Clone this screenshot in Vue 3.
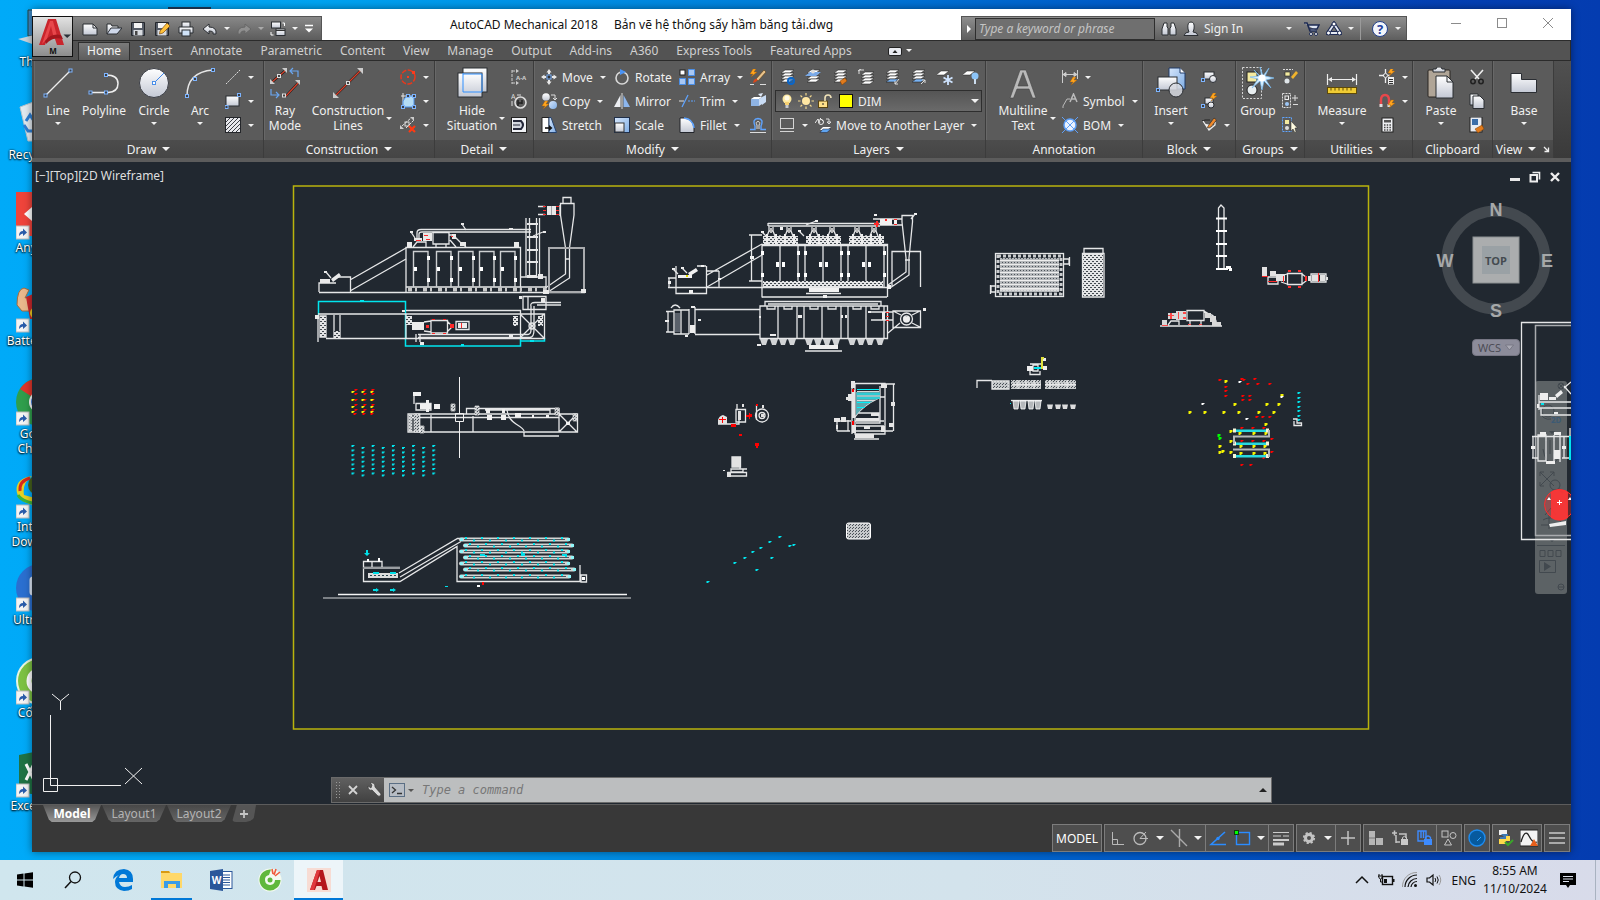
<template>
    <div class="screen">
        <svg class="defs" width="0" height="0" aria-hidden="true">
            <defs>
                <linearGradient id="silver" x1="0" y1="0" x2="0" y2="1">
                    <stop offset="0" stop-color="#ffffff" />
                    <stop offset="1" stop-color="#c3c8d4" />
                </linearGradient>
                <linearGradient id="sky" x1="0" y1="0" x2="1" y2="1">
                    <stop offset="0" stop-color="#d6e6fb" />
                    <stop offset="1" stop-color="#7faee6" />
                </linearGradient>
            </defs>
        </svg>

        <main class="desktop">
            <div class="peek"></div>
            <div class="shortcuts">
                <div v-for="s in shortcuts" :key="s.name" class="shortcut">
                    <Icon :name="s.icon" :size="48" />
                    <span>{{ s.name }}</span>
                </div>
            </div>

            <section class="window">
                <button class="app-button" aria-label="Application menu">
                    <Icon name="logo" :size="40" />
                </button>

                <header class="titlebar">
                    <div class="quick">
                        <template v-for="q in quick" :key="q.icon">
                            <button class="ic" :aria-label="q.icon"><Icon :name="q.icon" /></button>
                            <i v-if="q.caret" class="caret" :class="{ dim: q.dim }"></i>
                        </template>
                        <button class="ic more" aria-label="Customize"><Icon name="customize" :size="10" /></button>
                    </div>
                    <h1 class="title"><span>AutoCAD Mechanical 2018</span><span>Bản vẽ hệ thống sấy hầm băng tải.dwg</span></h1>
                    <div class="infocenter">
                        <button class="play" aria-label="Collapse search"><i class="tri-right"></i></button>
                        <input type="text" class="search" placeholder="Type a keyword or phrase" aria-label="Search help" />
                        <button class="ic" aria-label="Search"><Icon name="binoculars" /></button>
                        <button class="signin"><Icon name="person" /><span>Sign In</span><i class="caret"></i></button>
                        <button class="ic" aria-label="App store"><Icon name="cart" /></button>
                        <button class="ic" aria-label="Stay connected"><Icon name="share" /></button>
                        <i class="caret"></i>
                        <span class="divider"></span>
                        <button class="ic" aria-label="Help"><Icon name="help" :size="18" /></button>
                        <i class="caret"></i>
                    </div>
                    <div class="win-controls">
                        <button aria-label="Minimize"><Icon name="winMin" :size="12" /></button>
                        <button aria-label="Maximize"><Icon name="winMax" :size="12" /></button>
                        <button aria-label="Close"><Icon name="winClose" :size="12" /></button>
                    </div>
                </header>

                <nav class="tabs">
                    <button v-for="t in tabs" :key="t" :class="{ active: t === activeTab }" @click="activeTab = t">{{ t }}</button>
                    <button class="min-ribbon" aria-label="Minimize ribbon"><Icon name="ribbonMin" :size="14" /><i class="caret"></i></button>
                </nav>

                <div class="ribbon">
                    <section class="panel draw">
                        <div class="tools">
                            <button class="big w44"><Icon name="line" :size="32" /><span>Line</span><i class="caret"></i></button>
                            <button class="big w48"><Icon name="polyline" :size="32" /><span>Polyline</span></button>
                            <button class="big w52"><Icon name="circle" :size="32" /><span>Circle</span><i class="caret"></i></button>
                            <button class="big w40"><Icon name="arc" :size="32" /><span>Arc</span><i class="caret"></i></button>
                            <div class="col">
                                <button v-for="i in ['dashLine', 'rect', 'hatch']" :key="i" class="small" :aria-label="i"><Icon :name="i" /><i class="caret"></i></button>
                            </div>
                        </div>
                        <footer>Draw <i class="caret big-caret"></i></footer>
                    </section>

                    <section class="panel construction">
                        <div class="tools">
                            <button class="big w38"><Icon name="ray" :size="32" /><span>Ray<br />Mode</span></button>
                            <button class="big w88"><Icon name="xline" :size="32" /><span class="side">Construction<br />Lines<i class="caret"></i></span></button>
                            <div class="col">
                                <button v-for="i in ['cCircle', 'cRegion', 'cErase']" :key="i" class="small" :aria-label="i"><Icon :name="i" /><i class="caret"></i></button>
                            </div>
                        </div>
                        <footer>Construction <i class="caret big-caret"></i></footer>
                    </section>

                    <section class="panel detail">
                        <div class="tools">
                            <button class="big w70"><Icon name="hide" :size="32" /><span class="side">Hide<br />Situation<i class="caret"></i></span></button>
                            <div class="col">
                                <button v-for="i in ['section', 'detailView', 'breakView']" :key="i" class="small" :aria-label="i"><Icon :name="i" /></button>
                            </div>
                        </div>
                        <footer>Detail <i class="caret big-caret"></i></footer>
                    </section>

                    <section class="panel modify">
                        <div class="tools">
                            <div v-for="(c, n) in modify" :key="n" class="col" :class="'m' + n">
                                <button v-for="b in c" :key="b.icon" class="small" :aria-label="b.icon">
                                    <Icon :name="b.icon" /><span v-if="b.label">{{ b.label }}</span><i v-if="b.caret" class="caret"></i>
                                </button>
                            </div>
                        </div>
                        <footer>Modify <i class="caret big-caret"></i></footer>
                    </section>

                    <section class="panel layers">
                        <div class="tools">
                            <div class="col">
                                <div class="layer-icons">
                                    <button v-for="i in layerIcons" :key="i" class="ic" :aria-label="i"><Icon :name="i" /></button>
                                </div>
                                <div class="combo">
                                    <Icon name="bulb" /><Icon name="sun" /><Icon name="unlock" />
                                    <i class="swatch"></i>
                                    <select aria-label="Layer"><option>DIM</option></select>
                                    <i class="caret big-caret"></i>
                                </div>
                                <div class="layer-move">
                                    <button class="small" aria-label="Layer state"><Icon name="layerBox" /><i class="caret"></i></button>
                                    <button class="small"><Icon name="moveLayer" /><span>Move to Another Layer</span><i class="caret"></i></button>
                                </div>
                            </div>
                        </div>
                        <footer>Layers <i class="caret big-caret"></i></footer>
                    </section>

                    <section class="panel annotation">
                        <div class="tools">
                            <button class="big w70"><Icon name="text" :size="32" /><span class="side">Multiline<br />Text<i class="caret"></i></span></button>
                            <div class="col">
                                <button class="small" aria-label="Dimension"><Icon name="dimension" /><i class="caret"></i></button>
                                <button class="small"><Icon name="symbol" /><span>Symbol</span><i class="caret"></i></button>
                                <button class="small"><Icon name="bom" /><span>BOM</span><i class="caret"></i></button>
                            </div>
                        </div>
                        <footer>Annotation</footer>
                    </section>

                    <section class="panel block">
                        <div class="tools">
                            <button class="big w52"><Icon name="insert" :size="32" /><span>Insert</span><i class="caret"></i></button>
                            <div class="col">
                                <button class="small" aria-label="Create block"><Icon name="blockMake" /></button>
                                <button class="small" aria-label="Edit block"><Icon name="blockFlash" /></button>
                                <button class="small" aria-label="Edit attributes"><Icon name="blockEdit" /><i class="caret"></i></button>
                            </div>
                        </div>
                        <footer>Block <i class="caret big-caret"></i></footer>
                    </section>

                    <section class="panel groups">
                        <div class="tools">
                            <button class="big w40"><Icon name="group" :size="32" /><span>Group</span></button>
                            <div class="col">
                                <button v-for="i in ['groupEdit', 'groupAdd', 'groupPick']" :key="i" class="small" :aria-label="i"><Icon :name="i" /></button>
                            </div>
                        </div>
                        <footer>Groups <i class="caret big-caret"></i></footer>
                    </section>

                    <section class="panel utilities">
                        <div class="tools">
                            <button class="big w70"><Icon name="measure" :size="32" /><span>Measure</span><i class="caret"></i></button>
                            <div class="col">
                                <button class="small" aria-label="Point"><Icon name="point" /><i class="caret"></i></button>
                                <button class="small" aria-label="Snap"><Icon name="magnet" /><i class="caret"></i></button>
                                <button class="small" aria-label="Calculator"><Icon name="calc" /></button>
                            </div>
                        </div>
                        <footer>Utilities <i class="caret big-caret"></i></footer>
                    </section>

                    <section class="panel clipboard">
                        <div class="tools">
                            <button class="big w52"><Icon name="paste" :size="32" /><span>Paste</span><i class="caret"></i></button>
                            <div class="col">
                                <button v-for="i in ['cut', 'copyClip', 'matchClip']" :key="i" class="small" :aria-label="i"><Icon :name="i" /></button>
                            </div>
                        </div>
                        <footer>Clipboard</footer>
                    </section>

                    <section class="panel view">
                        <div class="tools">
                            <button class="big w60"><Icon name="base" :size="32" /><span>Base</span><i class="caret"></i></button>
                        </div>
                        <footer>View <i class="caret big-caret"></i><Icon name="launcher" :size="8" /></footer>
                    </section>
                </div>

                <div class="canvas">
                    <svg class="navbar" viewBox="0 0 32 213" width="32" height="213">
                        <rect width="32" height="213" rx="3" fill="#5c6265" />
                        <g fill="none" stroke="#42494f">
                            <circle cx="26" cy="5" r="3" /><path d="M24 3l4 4M28 3l-4 4" />
                            <circle cx="13" cy="30" r="6" /><path d="M5 31a9 9 0 0 0 11 7" />
                            <path d="M11 73V60M15 73V59M19 73V60M8 68q2 14 10 14q6-2 6-12" />
                            <path d="M5 91L19 105M19 91L5 105M5 95V91H9M15 91H19V95M5 101V105H9" />
                            <circle cx="20" cy="104" r="5" /><path d="M24 108L28 112" stroke-width="2" />
                            <path d="M14 148V134M10 134L16 127L21 134M6 144H18M26 142a10 5 0 0 0-18-3" />
                            <path d="M2 164.500H30" />
                            <path d="M5 169.500H10V175.500H5ZM13 169.500H18V175.500H13ZM21 169.500H26V175.500H21ZM4.500 179.500H20.500V191.500H4.500Z" />
                            <circle cx="26" cy="206" r="3" /><path d="M23 206H29" />
                        </g>
                        <path d="M9 181L16 185.500L9 190ZM14 50H20L17 53ZM14 158H20L17 161Z" fill="#42494f" />
                        <text x="16" y="42" font-size="8" font-weight="700" fill="#3c5a74">2D</text>
                    </svg>

                    <svg class="drawing" viewBox="32 162 1539 642" preserveAspectRatio="xMinYMin meet">
                        <defs>
                            <pattern id="dots" width="3" height="3" patternUnits="userSpaceOnUse">
                                <rect width="3" height="3" fill="#c6c9cb" /><path d="M0 0h1v1H0zM1 2h1v1H1z" fill="#4a5158" />
                            </pattern>
                            <pattern id="mesh" width="4" height="4" patternUnits="userSpaceOnUse">
                                <rect width="4" height="4" fill="#e4e5e6" /><path d="M0 1h2v1H0zM2 3h2v1H2z" fill="#41484f" />
                            </pattern>
                            <pattern id="tubes" width="3" height="4" patternUnits="userSpaceOnUse">
                                <rect width="3" height="4" fill="#b4b7ba" /><path d="M0 0h3v1H0z" fill="#eeeeee" /><path d="M0 2h1v1H0z" fill="#4a5158" />
                            </pattern>
                        </defs>

                        <!-- sheet frame and ground lines -->
                        <rect x="293.500" y="186" width="1075" height="543" fill="none" stroke="#b9b30c" stroke-width="1.500" />
                        <path d="M338 594.500H627" stroke="#f4f4f4" stroke-width="1.500" />
                        <path d="M323 598H631" stroke="#9a9ea2" stroke-width="1.500" />

                        <!-- dryer, front view -->
                        <g class="w">
                            <path d="M319 292V283H336M338 277H350.500V292M350 280L406 248M350 291L406 259" />
                            <path d="M406 292V247.500H520.500V292M520 277H546V292M406 287H546" />
                            <path d="M319 292.500H585" stroke-width="1.500" />
                            <path d="M526 218V277M529.500 218V277M536.500 218V277M539.500 218V277" />
                            <path d="M527 224H538M527 237H538M527 250H538M527 262H538" stroke-width="2" />
                            <path d="M417 238V233Q417 229.500 421 229.500H531M419 238V234Q419 232 422 232H531" />
                            <path d="M433 232.500H449V244H433ZM449 235H453L460 242L466 247M450 240L456 247M413 247L417 242H426V247M436 244V248M446 244V248" />
                            <path d="M563 203V197.500H571V203M560.500 215V203.500H574V215L569.500 248V278L548 292M560.500 215L565.500 248V274L544 289M565 259H570" />
                            <path d="M538 206.500H545M538 214.500H545M551 206V215M560 205V216" />
                        </g>
                        <rect x="549" y="248" width="35" height="44" fill="none" stroke="#a9abae" stroke-width="2" />
                        <path d="M408 289.500H546" stroke="#c8c8c8" stroke-width="4" stroke-dasharray="4 3 2 6" />
                        <g v-for="x in [413, 436, 458, 479, 500]" :key="'d' + x">
                            <path :d="`M${x + 0.5} 287V251.500H${x + 15}V287`" fill="none" stroke="#cdcfd1" stroke-width="1.400" />
                            <path :d="`M${x + 1} 267h3v4h-3zM${x + 14} 256h3v4h-3zM${x + 14} 278h3v4h-3z`" fill="#fff" />
                        </g>
                        <path d="M320 279h10v4h-10zM331 279l8-6 2 3-8 6zM407 242h5v6h-5zM514 242h5v6h-5zM538 274h5v5h-5zM543 290h6v4h-6zM581 289h5v4h-5zM414 238h8v3h-8zM410 231h3v2h-3zM461 223h3v2h-3zM509 228h4v2h-4zM543 231h3v2h-3zM324 271h3v2h-3zM527 275h10v3h-10zM547 206h4v9h-4zM552 206h4v9h-4zM423 233h9v8h-9zM452 234h4v5h-4zM460 242h6v4h-6z" fill="#e9e9e9" />
                        <path d="M462 224L466 230M411 232L415 238M543 232L533 236M326 272L331 278" class="w" />
                        <path d="M543 206h3v1h-3zM543 210h3v1h-3zM543 214h3v1h-3zM556 206h3v1h-3zM556 210h3v1h-3zM556 214h3v1h-3zM416 240h5v1h-5zM424 235h4v1h-4zM426 239h4v1h-4zM451 236h2v1h-2z" fill="#ff2a2a" />

                        <!-- dryer, plan -->
                        <path d="M318.500 315V301.500H405.500V346H520.500V338M520 341H544.500V338" fill="none" stroke="#00e5ee" stroke-width="1.500" />
                        <g class="w">
                            <path d="M318 314H544.500V338.500H326M406 310.500H520.500V338M406 314V338M520 314L544 338M544 314L520 338M318 316V342" />
                            <path d="M320 316H326V337H320ZM334 315V338M340 315V338" />
                            <path d="M431 320.500H447.500V333H431ZM424 322L431 321M424 331L431 332M447 321L451 325V328L447 332M456 321.500H469V329.500H456ZM416 334V342M420 334V342" />
                            <path d="M418 334.500H528Q531 334 531 330V306M418 337.500H530Q534 337 534 330V306M531 306Q530 302.500 535 302.500H561M537 305H561M523 296.500H546V309.500H523ZM528 297V309" />
                            <circle cx="532" cy="326" r="3" />
                        </g>
                        <path d="M320 316h6v21h-6zM334 331h6v7h-6zM406 316h6v9h-6zM513 316h5v10h-5zM538 316h5v10h-5z" fill="url(#mesh)" />
                        <path d="M412 322h12v8h-12zM458 323h9v5h-9zM541 298h4v4h-4zM402 310h3v2h-3zM519 296h3v3h-3zM420 342h4v3h-4zM509 335h4v2h-4zM315 315h4v4h-4z" fill="#ececec" />
                        <path d="M432 319h3v1h-3zM443 319h3v1h-3zM432 333h3v1h-3zM443 333h3v1h-3zM426 325h3v3h-3zM450 324h4v4h-4zM461 323h1v5h-1z" fill="#ff2a2a" />
                        <path d="M360 300h4v2h-4zM461 344h3v2h-3zM530 340h4v2h-4z" fill="#00e5ee" />

                        <!-- dryer with rollers, front view -->
                        <g class="w">
                            <path d="M768 223.500H880M768 226H880M768 223V226" />
                            <path d="M762 244.500H887.500V297M762 244V297.500M762 245.500H887M780 235V281M798 245V281M805 245V281M823 235V281M841 245V281M848 245V281M866 235V281M884 245V288" />
                            <path d="M751.500 235V281M749 235H762M749 281H762M668 287.500H887M762 297H887M806 293.500H841" />
                            <path d="M707 275L762 244M707 287L762 255M676 266V293.500H706.500V266M697 266H706M719 271V287M706 271H719M669 278V288M668 278H676M676 287V278" />
                            <path d="M902 222V215.500H912.500V222L909 258V275L890 288M902 222L906 258V272L888 285M905 260H910M892 287V251.500H920.500V287M873 219H902M880 225H902" />
                        </g>
                        <rect x="763" y="281" width="120" height="6" fill="url(#mesh)" />
                        <g v-for="x in [771, 789, 814, 832, 857, 874]" :key="'h' + x">
                            <path :d="`M${x - 2} 227V231L${x - 4} 236M${x + 2} 227V231L${x + 4} 236M${x - 2} 231H${x + 2}`" class="w" />
                            <path :d="`M${x - 1} 228h2v5h-2z`" fill="#bbb" />
                        </g>
                        <g v-for="x in [763, 806, 849]" :key="'r' + x">
                            <rect :x="x" y="236" width="35" height="8" fill="url(#mesh)" />
                            <path :d="`M${x + 4} 234v10M${x + 13} 234v10M${x + 22} 234v10M${x + 31} 234v10`" stroke="#eee" stroke-width="2" />
                            <path :d="`M${x + 13} 262h3v5h-3zM${x + 19} 262h3v5h-3zM${x - 2} 251h3v4h-3zM${x + 34} 251h3v4h-3zM${x - 2} 273h3v4h-3zM${x + 34} 273h3v4h-3z`" fill="#fff" />
                        </g>
                        <path d="M809 288h30v4h-30zM823 295h4v3h-4zM750 256h4v3h-4zM689 290h4v3h-4zM668 281h3v3h-3zM678 275h14v3h-14zM688 273l8-5 2 3-8 5zM880 219h12v6h-12zM894 219h3v6h-3zM672 268h3v2h-3zM681 267h3v2h-3zM701 265h3v2h-3zM718 278h3v2h-3zM914 213h3v2h-3zM887 285h4v4h-4zM780 227h3v3h-3zM798 230h3v2h-3zM874 214h3v2h-3zM761 231h3v2h-3zM815 220h3v2h-3z" fill="#f2f2f2" />
                        <path d="M816 221L806 225M673 269L678 274M682 268L687 273M915 214L911 219M799 231L804 236M762 232L766 236" class="w" />
                        <path d="M874 223h5v2h-5zM876 221h2v6h-2zM885 219h2v2h-2zM894 219h3v1h-3zM894 224h3v1h-3z" fill="#ff2a2a" />
                        <path d="M686 275h2v2h-2z" fill="#e8e000" />

                        <!-- dryer with rollers, plan -->
                        <g class="w">
                            <path d="M695 309.500H760M695 334.500H760M760 306H887.500V338.500H760ZM765 306V301.500H881V306M768 304H878" />
                            <path d="M778 306V338M797 306V338M804 306V338M822 306V338M841 306V338M848 306V338M866 306V338M884 306V338" />
                            <path d="M674 310V334H681V310ZM689 309V334M695 307V334M681 334H689M681 310H689M668 311V332M666 311.500H674M666 332H674M671 308q4-6 9 0" />
                            <path d="M893 311H920.500V327.500H893ZM893 311L901 315M920 311L912 315M920 327L912 323M888 333L900 323M871 312H893M871 320H893V312" />
                            <circle cx="906.500" cy="319" r="6" /><circle cx="906.500" cy="319" r="3" />
                            <path d="M805 351H842" />
                        </g>
                        <path d="M675 313h5v19h-5z" fill="#59606a" />
                        <g v-for="x in [764, 774, 783, 792, 809, 818, 827, 836, 852, 861, 870, 880]" :key="'t' + x">
                            <path :d="`M${x - 4} 339H${x + 4}L${x + 2} 345H${x - 2}Z`" fill="#d2d4d6" />
                        </g>
                        <g v-for="x in [771, 788, 814, 832, 857, 875]" :key="'b' + x">
                            <path :d="`M${x - 4} 306v3h8v-3`" class="w" />
                        </g>
                        <path d="M809 345h29v4h-29zM690 325h5v8h-5zM665 320h4v2h-4zM691 306h4v2h-4zM698 319h3v2h-3zM685 335h3v2h-3zM770 334h6v2h-6zM759 316h2v2h-2zM798 315h2v3h-2zM800 315h2v3h-2zM841 315h2v3h-2zM845 315h2v3h-2zM757 344h4v2h-4zM868 311h3v2h-3zM923 308h3v3h-3zM904 317h5v5h-5zM882 312h3v8h-3z" fill="#eee" />
                        <path d="M886 312h3v1h-3zM886 316h3v1h-3zM886 320h3v1h-3z" fill="#ff2a2a" />

                        <!-- heat exchanger -->
                        <rect x="995.500" y="253.500" width="68" height="43" class="w" />
                        <rect x="998" y="256" width="63" height="38" fill="none" stroke="#c9cbcd" stroke-width="3" stroke-dasharray="3 2" />
                        <rect x="1000" y="258" width="59" height="34" fill="url(#tubes)" />
                        <path d="M1000 290H1059M1064 259H1069V264H1064M1069.500 257V266M995 286H991V292H995M990.500 285V294" class="w" />
                        <rect x="1083" y="254" width="20" height="42" fill="url(#mesh)" />
                        <path d="M1082.500 253.500H1104V297H1082.500ZM1084 253V248.500H1103V253" class="w" />

                        <!-- chimney, fans and burner -->
                        <path d="M1218.500 269V208L1221 205L1224 208V269" class="w" />
                        <path d="M1216 218.500H1227M1216 231H1227M1216 244H1227M1216 256H1227M1216 269H1228" stroke="#fff" stroke-width="2" />
                        <path d="M1226 266h5v3h-5zM1229 268h3v3h-3z" fill="#fff" />
                        <path d="M1287.500 273.500H1302V284.500H1287.500ZM1281 276L1287 274M1281 282L1287 284M1302 274L1306 277V281L1302 284M1311 274H1326V282H1311ZM1268 277H1278V284H1268Z" class="w" />
                        <path d="M1262 267h5v10h-5zM1270 271h6v5h-6zM1276 274h9v7h-9zM1312 275h6v6h-6zM1320 275h5v6h-5zM1326 277h2v3h-2zM1308 276h3v5h-3z" fill="#e2e2e2" />
                        <path d="M1288 270h3v2h-3zM1298 270h3v2h-3zM1288 286h3v2h-3zM1298 286h3v2h-3zM1262 276h6v1h-6zM1268 281h9v1h-9zM1305 276h2v5h-2zM1283 276h1v6h-1zM1318 273h1v9h-1z" fill="#ff2a2a" />
                        <path d="M1187 310.500H1204V320.500H1187ZM1204 311L1209 314Q1217 316 1216 325M1190 320V326M1201 320V326M1160 326H1222M1168 325L1171 321H1179V325" class="w" />
                        <path d="M1162 320h5v5h-5zM1176 311h10v9h-10zM1205 313h6v5h-6zM1210 316h6v6h-6zM1212 322h9v4h-9zM1168 313h8v6h-8z" fill="#d9d9d9" />
                        <path d="M1168 315h6v1h-6zM1170 313h2v6h-2zM1178 312h1v7h-1zM1183 312h3v2h-3zM1183 317h3v2h-3zM1188 324h3v1h-3zM1199 324h3v1h-3zM1162 325h6v1h-6z" fill="#ff4a4a" />

                        <!-- roof parts -->
                        <path d="M977 388V380.500H992M1030 364H1042V357M1030 371V374.500H1040V371M1033 365H1038V371H1033Z" class="w" />
                        <path d="M992 381h17v8h-17zM1011 380h30v9h-30zM1045 380h31v9h-31z" fill="url(#dots)" />
                        <path d="M1012 384.500H1041M1045 384.500H1076M992 381H1009V389H992ZM1018 380V389M1026 380V389M1034 380V389M1050 380V389M1058 380V389M1067 380V389" class="w" />
                        <path d="M1027 366h6v5h-6zM1042 358h4v3h-4zM1043 366h4v4h-4z" fill="#eee" />
                        <path d="M1041 357h3v2h-3zM1041 359h2v10h-2z" fill="#dfe03a" /><path d="M1034 367h7v2h-7zM1010 403h1v1h-1z" fill="#00e5ee" />
                        <path d="M1011 400.500H1042" class="w" />
                        <path v-for="x in [1016, 1023, 1031, 1038]" :key="'u' + x" :d="`M${x - 3} 401H${x + 3}L${x + 2} 409H${x - 2}Z`" fill="#b5b8bb" stroke="#fff" stroke-width=".8" />
                        <path v-for="x in [1050, 1058, 1065, 1073]" :key="'v' + x" :d="`M${x - 3} 404.500H${x + 3}L${x + 2} 409H${x - 2}Z`" fill="#ddd" />

                        <!-- belt frame, plan -->
                        <g class="w">
                            <path d="M408 414H577.500V432H408ZM412 417.500H559M431 415V432M473 416V432M466.500 414V408.500H559V432M485 410H550V414M559 414L577 432M577 414L559 432M524 432V436H559" />
                            <path d="M507 410Q508 419 516 424T524 431M414 404V394H417M416 403.500H431V410H416Z" />
                        </g>
                        <path d="M409 415H412V431H409ZM414 414h6v18h-6zM420 426h4v7h-4zM475 406h4v9h-4zM555 408h4v7h-4zM573 414h4v7h-4zM451 404h4v7h-4z" fill="url(#dots)" stroke="#fff" stroke-width=".6" />
                        <path d="M413 392h8v4h-8zM420 404h11v5h-11zM426 400h3v12h-3zM434 404h6v5h-6zM487 415h5v5h-5zM501 415h5v5h-5zM502 409h3v4h-3zM486 409h4v4h-4zM515 413h6v4h-6zM532 415h2v3h-2zM546 415h3v3h-3zM566 422h4v3h-4z" fill="#f1f1f1" />

                        <!-- small parts -->
                        <path d="M736 409.500H745.500V422H736ZM718 424H739V420M737 404V409M756.500 420V405M740 467V469M732 457H740.500V467H732ZM731 469H743V472H731ZM728 472.500H746.500V476H728ZM743 469H747" class="w" />
                        <circle cx="762" cy="415.500" r="6.500" class="w" /><circle cx="762" cy="415.500" r="3" class="w" />
                        <path d="M732 457h8v10h-8zM727 472h4v5h-4zM738 411h3v9h-3zM742 404h2v3h-2zM762 405h2v3h-2zM723 470h2v1h-2zM718 424v-4q1-4 5-5l4 2v7zM761 414h3v3h-3z" fill="#e2e2e2" />
                        <path d="M719 419h7v1h-7zM722 417h1v6h-1zM746 415h4v2h-4zM749 413h1v6h-1zM750 414h2v3h-2zM731 424h5v3h-5zM739 434h3v2h-3zM755 443h4v3h-4zM756 446h2v2h-2zM756 404h2v2h-2z" fill="#f00" />

                        <!-- cross section -->
                        <g class="w">
                            <path d="M855 383.500H885V434H855ZM852 384V434M885 431H893M893.500 384V431M885 384H895M880 386V423H856M879 397L885 397M855 421H884M855 426H884M855 431H884M834 421H851M837 431H850M837 420V431M848 420V431M854 439H879" />
                            <path d="M879 398Q862 406 855 417M858 413H879V420" />
                        </g>
                        <path d="M856 392H880V398Q866 403 856 415Z" fill="#5aa9b0" /><path d="M857 389.500H879M857 394H880M857 398H880M857 402.500H870M857 407.500H865" stroke="#00f0f8" /><path d="M857 391.500H879M857 396H880M857 400.500H875" stroke="#d8d8d8" />
                        <path d="M851 381h4v7h-4zM881 384h6v4h-6zM846 397h5v3h-5zM848 394h4v7h-4zM834 418h6v4h-6zM841 417h5v5h-5zM856 418h23v3h-23zM855 434h19v4h-19zM852 425h4v8h-4zM881 426h4v6h-4zM864 426h6v3h-6zM891 402h4v4h-4zM889 423h4v4h-4zM871 413h8v3h-8zM836 425h2v4h-2zM852 390h3v28h-3z" fill="#e6e6e6" />
                        <path d="M852 389h2v3h-2zM852 421h2v4h-2z" fill="#f00" />

                        <!-- belts, section -->
                        <g class="w">
                            <path d="M363.500 567V561.500H382V567M372 561V567M363.500 567V581.500H400L457 546.500V581.500H580V565M399 573L457.500 538.500H463M400 577L461 541.500M363.500 567.500H400M581 575H586.500V582H581Z" />
                        </g>
                        <path d="M363 568H400" stroke="#9a9ea2" stroke-width="2" />
                        <path d="M368 573h30v5h-30z" fill="#dcdcdc" /><path d="M370 575.500H397" stroke="#29424c" stroke-dasharray="2 2" />
                        <g v-for="(b, i) in belts" :key="'belt' + i">
                            <path :d="`M${b[0]} ${b[1]}H${b[2]}`" stroke="#d3d6d4" stroke-width="4" stroke-linecap="round" />
                            <path :d="`M${b[0] + 3} ${b[1]}H${b[2] - 3}`" stroke="#4c565c" stroke-width="1" />
                            <path :d="`M${b[0] + 4} ${b[1] - 1.5}H${b[2] - 2}`" stroke="#00e5ee" stroke-width="2" stroke-dasharray="2 14" />
                            <path :d="`M${b[0] + 12} ${b[1] + 1}H${b[2] - 2}`" stroke="#00e5ee" stroke-width="2" stroke-dasharray="2 14" />
                            <path :d="`M${b[0] - 1} ${b[1] - 1.5}h3v3h-3zM${b[2] - 1} ${b[1] - 1.5}h3v3h-3z`" fill="#8ff7fa" />
                        </g>
                        <path d="M366 550h2v3h2l-3 3-3-3h2zM373 572h6v2h-6zM390 572h6v2h-6zM373 589h3v-1l3 2-3 2v-1h-3zM390 589h3v-1l3 2-3 2v-1h-3zM445 586h3v1h-3zM480 554h5v2h-5zM521 553h4v3h-4zM562 554h5v2h-5z" fill="#00dfe8" />
                        <path d="M477 585h3v2h-3zM582 577h3v3h-3zM367 559h2v3h-2zM378 558h2v4h-2z" fill="#fff" /><path d="M482 582h2v3h-2z" fill="#f00" />

                        <!-- perforated tray -->
                        <rect x="846.500" y="523" width="24" height="16" rx="2" fill="url(#dots)" stroke="#fff" />

                        <!-- flow marks -->
                        <path v-for="(m, i) in marks" :key="'mk' + i" :d="`M${m[0] - 1.5} ${m[1] - 1}h3v${m[3]}h-1v1h-2z`" :fill="m[2]" />
                        <g v-for="y in [430.5, 443.5, 456]" :key="'bar' + y">
                            <rect x="1234" :y="y - 1" width="34" height="2.500" fill="#27d9e0" />
                            <path :d="`M1233 ${y - 2}h3v4h-3zM1266 ${y - 2}h3v4h-3z`" fill="#f6f6d8" />
                        </g>
                        <path d="M1233 436.500H1269V430M1234 437V444M1233 449.500H1269V457" fill="none" stroke="#b4b7ba" stroke-width="2" />
                        <path d="M1293 419H1297V423H1301.500V425.500H1294V421" class="w" />

                        <!-- neighbouring sheet -->
                        <path d="M1575 322.500H1521.500V539.500H1575" class="w" />
                        <path d="M1575 325.500H1535.500V535.500H1575" fill="none" stroke="#a9abae" stroke-width="1.500" />
                        <path d="M1539 402H1575M1539 408H1575M1541 408V415H1575M1564 388L1571 382M1564 386L1571 394M1532 436.500H1571M1533 437V458M1538 435V461H1546V435ZM1554 435V462M1560 435V462M1564 437V458M1562 458H1570M1570 428V460M1539 395V410M1532 458H1538" class="w" />
                        <path d="M1540 393h8v7h-8zM1549 397h7v3h-7zM1555 395l6-5 2 3-6 5zM1540 432h6v4h-6zM1554 432h7v3h-7zM1554 450h6v9h-6zM1546 461h9v3h-9zM1531 446h4v3h-4zM1562 446h4v3h-4zM1537 404h2v4h-2zM1554 412h4v2h-4zM1549 524l17-3v4l-16 2z" fill="#eee" />
                        <path d="M1569 436h3v24h-3zM1541 403h3v2h-3z" fill="#00e5ee" />
                        <circle cx="1559.500" cy="504.500" r="15" fill="#ff2c2c" fill-opacity=".3" stroke="#ff2c2c" />
                        <path d="M1551 492a15 15 0 0 1 17 0v26a15 15 0 0 1-17 0z" fill="#ff3434" fill-opacity=".9" />
                        <path d="M1547 500l2-3 2 3zM1568 500l2-3 2 3zM1559 500h1v5h-1zM1557 502h5v1h-5z" fill="#fff" />

                        <!-- UCS icon and cursor -->
                        <g class="thin">
                            <path d="M43.500 778.500H57.500V791.500H43.500ZM50.500 715V785.500H121M125 768L142 784M142 768L125 784M52 694L60.500 701L69 694M60.500 701V710" />
                            <path d="M459.500 377V413M459.500 422V458M455.500 413.500H463.500V421.500H455.500Z" />
                        </g>
                    </svg>

                    <div class="vp-label">[−][Top][2D Wireframe]</div>
                    <div class="doc-controls">
                        <button aria-label="Minimize drawing"><Icon name="docMin" :size="12" /></button>
                        <button aria-label="Restore drawing"><Icon name="docRestore" :size="12" /></button>
                        <button aria-label="Close drawing"><Icon name="docClose" :size="12" /></button>
                    </div>

                    <svg class="cube" viewBox="0 0 120 124" width="120" height="124">
                        <circle cx="60" cy="60" r="49" fill="none" stroke="#43494f" stroke-width="11" />
                        <rect x="37" y="37" width="46" height="46" fill="#abadae" stroke="#8b8f91" />
                        <rect x="46" y="46" width="28" height="28" fill="#9aa1a5" />
                        <text x="60" y="65" class="cube-top">TOP</text>
                        <text x="60" y="16" class="dir">N</text><text x="60" y="117" class="dir">S</text>
                        <text x="9" y="67" class="dir">W</text><text x="111" y="67" class="dir">E</text>
                    </svg>
                    <button class="wcs">WCS <Icon name="wcsCaret" :size="9" /></button>

                    <div class="command">
                        <div class="grip"></div>
                        <button class="cmd-btn" aria-label="Close command line"><Icon name="cmdClose" :size="12" /></button>
                        <button class="cmd-btn" aria-label="Customize command line"><Icon name="wrench" /></button>
                        <div class="cmd-box">
                            <Icon name="prompt" /><i class="caret dark"></i>
                            <input type="text" placeholder="Type a command" aria-label="Command" />
                            <i class="tri-up"></i>
                        </div>
                    </div>
                </div>

                <div class="bottom">
                    <div class="layouts">
                        <button v-for="l in layouts" :key="l" :class="{ active: l === 'Model' }"><span>{{ l }}</span></button>
                        <button class="plus" aria-label="New layout"><Icon name="plusSmall" :size="10" /></button>
                    </div>
                    <div class="status">
                        <div v-for="(g, n) in status" :key="n" class="group">
                            <div v-for="(cell, k) in g" :key="k" class="cell">
                                <template v-for="(i, j) in cell" :key="j">
                                    <span v-if="i === 'v'" class="drop"><i class="caret status-caret"></i></span>
                                    <button v-else-if="i === 'MODEL'" class="model">MODEL</button>
                                    <button v-else class="st" :aria-label="i"><Icon :name="i" :size="18" /></button>
                                </template>
                            </div>
                        </div>
                    </div>
                </div>
            </section>
        </main>

        <footer class="taskbar">
            <button v-for="t in tasks" :key="t.icon" class="task" :class="t.state" :aria-label="t.icon"><Icon :name="t.icon" :size="24" /></button>
            <div class="tray">
                <Icon name="chevron" :size="18" /><Icon name="battery" :size="18" /><Icon name="wifi" :size="18" /><Icon name="sound" :size="18" />
                <span class="lang">ENG</span>
                <time class="clock">8:55 AM<br />11/10/2024</time>
                <button class="note" aria-label="Notifications"><Icon name="note" :size="18" /></button>
                <span class="show-desktop"></span>
            </div>
        </footer>
    </div>
</template>

<script setup>
import { ref, h } from "vue";

// [viewBox size, markup]
const paper = 'fill="url(#silver)" stroke="#2b2e33"';
const flash = (x, y) => `<path d="M${x + 3} ${y}L${x} ${y + 5}H${x + 3}L${x + 1} ${y + 8}L${x + 7} ${y + 3}H${x + 4}L${x + 6} ${y}Z" fill="#ffa51e" stroke="#a85c00" stroke-width=".4"/>`;
const knob = (x, y) => `<rect x="${x - 1.5}" y="${y - 1.5}" width="3" height="3" fill="#3b3f45" stroke="#7db4ff"/>`;
const stack = (c = "#fff") => `<path d="M6 1H15L11 4H2Z" fill="#fff" stroke="#2a2a2a" stroke-width=".6"/><path d="M6 4H15L11 7H2Z" fill="#fff" stroke="#2a2a2a" stroke-width=".6"/><path d="M6 7H15L11 10H2Z" fill="#fff" stroke="#2a2a2a" stroke-width=".6"/><path d="M6 10H15L11 13H2Z" fill="${c}" stroke="#2a2a2a" stroke-width=".6"/>`;
const arrow = '<rect x="0" y="34" width="13" height="13" fill="#f4f4f4" stroke="#bbb"/><path d="M3 44Q3 39 7 39V36.500L11 40.500L7 44V41.500Q5 41.500 3 44Z" fill="#2a5caa"/>';

const icons = {
    logo: [40, '<path d="M6 28L15 2H23L31 28H24L22 22H14L12 28Z" fill="#c9252c"/><path d="M14 22L18 9L21 22L24 19L20 4H17L9 27Z" fill="#e8474b"/><path d="M12 24Q18 16 28 18L30 22Q20 19 13 27Z" fill="#a3161d"/><path d="M30.500 17.500H38L34.200 21Z" fill="#2b3138"/><text x="20" y="37" font-size="8" font-weight="700" text-anchor="middle" fill="#111">M</text>'],
    new: [16, `<path d="M1 3H11L15 7V14H1Z" ${paper}/><path d="M11 3V7H15" fill="none" stroke="#2b2e33"/>`],
    open: [16, `<path d="M1 13V3H5L6 5H12V7" ${paper}/><path d="M1 13L5 7H16L11 13Z" fill="#cfd8ea" stroke="#2b2e33"/>`],
    save: [16, `<path d="M1.500 1.500H14.500V14.500H1.500Z" fill="#555b66" stroke="#24272c"/><rect x="4" y="2" width="8" height="5" fill="#f4f4f4"/><rect x="3.500" y="9" width="9" height="5.500" fill="#d8dbe0"/><rect x="5" y="10" width="2.500" height="4" fill="#444"/>`],
    saveas: [16, `<path d="M1.500 1.500H14.500V14.500H1.500Z" fill="#555b66" stroke="#24272c"/><rect x="4" y="2" width="8" height="5" fill="#f4f4f4"/><rect x="3.500" y="9" width="9" height="5.500" fill="#d8dbe0"/><path d="M6 10L13 2L16 5L9 12L5.500 13Z" fill="#ffc13b" stroke="#7b4a10" stroke-width=".7"/>`],
    print: [16, `<rect x="4" y="1" width="8" height="6" ${paper}/><path d="M1 6H15V12H1Z" ${paper}/><rect x="4" y="9" width="8" height="6" fill="#cfe2f8" stroke="#2b2e33"/>`],
    undo: [16, `<path d="M1 8L7 3V6Q15 6 14 13H11Q12 10 7 10V13Z" ${paper}/>`],
    redo: [16, '<path d="M15 8L9 3V6Q1 6 2 13H5Q4 10 9 10V13Z" fill="#8f8f8f" stroke="#666"/>'],
    workspace: [16, `<rect x="1.500" y="1" width="9" height="6" ${paper}/><rect x="6" y="8" width="9" height="6.500" ${paper}/><path d="M6 9.500H15" stroke="#333"/><path d="M12.500 2H14.500V5M1 11V14H3.500" fill="none" stroke="#fff"/>`],
    customize: [10, '<path d="M1 1.500H9" stroke="#fff" stroke-width="1.500"/><path d="M1 4.500H9L5 8.500Z" fill="#fff"/>'],
    binoculars: [16, `<path d="M3 2H6V6L7 7V14H1V8Z" ${paper}/><path d="M13 2H10V6L9 7V14H15V8Z" ${paper}/>`],
    person: [16, `<path d="M1 14.500Q2 11 6 11L5 8Q4 1 8 1Q12 1 11 8L10 11Q14 11 15 14.500Z" ${paper}/>`],
    cart: [16, '<path d="M0 2H3L6 10H13M4 4H15L13 8H5" fill="#dfe6f4" stroke="#1d2a52" stroke-width="1.600"/><circle cx="7" cy="13" r="1.500" fill="#fff" stroke="#1d2a52"/><circle cx="12" cy="13" r="1.500" fill="#fff" stroke="#1d2a52"/>'],
    share: [16, '<path d="M8 3L14 12H2Z" fill="none" stroke="#1d2a52" stroke-width="4"/><path d="M8 3L14 12H2Z" fill="none" stroke="#e6ebf5" stroke-width="1.800"/><circle cx="8" cy="3" r="2" fill="#fff" stroke="#1d2a52"/><circle cx="2.500" cy="12" r="2" fill="#fff" stroke="#1d2a52"/><circle cx="13.500" cy="12" r="2" fill="#fff" stroke="#1d2a52"/>'],
    help: [18, '<circle cx="9" cy="9" r="7.500" fill="#f2f5fb" stroke="#23408c"/><text x="9" y="13.500" font-size="13" font-weight="700" text-anchor="middle" fill="#1f3fa0">?</text>'],
    winMin: [12, '<path d="M1 6.500H11" stroke="#8b8b8b"/>'],
    winMax: [12, '<rect x="1.500" y="1.500" width="9" height="9" fill="none" stroke="#8b8b8b"/>'],
    winClose: [12, '<path d="M1 1L11 11M11 1L1 11" stroke="#8b8b8b"/>'],
    ribbonMin: [14, '<rect x=".5" y="3.500" width="13" height="8" rx="1.500" fill="#e8eaf0" stroke="#222"/><path d="M4.500 9L7 6L9.500 9Z" fill="#222"/>'],
    line: [32, '<path d="M4 28L28 4" stroke="#eee" stroke-width="1.300"/>' + knob(3.5, 28.5) + knob(28.500, 3.500)],
    polyline: [32, '<path d="M2 25.500H20Q30 25 30 16.500Q30 8 18 8" fill="none" stroke="#eee" stroke-width="1.500"/>' + knob(2.500, 25.500) + knob(18, 25.500) + knob(18, 8)],
    circle: [32, '<circle cx="16" cy="16" r="14.500" fill="url(#silver)" stroke="#3a3d44"/><path d="M16 16L26 6" stroke="#3d86e8"/><rect x="14.500" y="14.500" width="3" height="3" fill="#fff" stroke="#4a8fe8"/>'],
    arc: [32, '<path d="M3 29Q3 5 29 3" fill="none" stroke="#e6e6e6" stroke-width="1.500"/>' + knob(3, 29) + knob(11, 12) + knob(29, 3)],
    dashLine: [16, '<path d="M1 15L15 1" stroke="#ddd" stroke-dasharray="2 1"/>'],
    rect: [16, `<rect x="1" y="3" width="13" height="10" ${paper}/>` + knob(1.500, 14) + knob(14, 2)],
    hatch: [16, '<rect x=".5" y=".5" width="15" height="15" fill="#e8e8ec" stroke="#24262a"/><path d="M1 5L5 1M1 9L9 1M1 13L13 1M3 15L15 3M7 15L15 7M11 15L15 11" stroke="#3c4046"/>'],
    ray: [32, '<path d="M3 15L17 3M17 29L30 15" stroke="#1d1d1d" stroke-width="2.400"/><path d="M3 15L17 3M17 29L30 15" stroke="#d8402a" stroke-width="1.200"/><path d="M13 1H18V6ZM1 12V17H6ZM26 13H31V18Z" fill="#ccc"/><rect x="8.500" y="7.500" width="3" height="3" fill="#444" stroke="#ddd"/><rect x="13.500" y="27" width="3" height="3" fill="#444" stroke="#ddd"/><path d="M29 10V4H22M24 1L21 4L24 7M2 22V28H9M7 25L10 28L7 31" fill="none" stroke="#6aa6f0" stroke-width="1.200"/>'],
    xline: [32, '<path d="M3 29L29 3" stroke="#1d1d1d" stroke-width="2.400"/><path d="M3 29L29 3" stroke="#d8402a" stroke-width="1.200"/><path d="M25 1H31V7ZM1 25V31H7Z" fill="#ccc"/><rect x="14.500" y="14.500" width="3" height="3" fill="#444" stroke="#ddd"/>'],
    cCircle: [16, '<circle cx="8" cy="8" r="7" fill="none" stroke="#e8381c" stroke-width="1.500" stroke-dasharray="5 1.500"/><path d="M7 7h2v2H7zM12 2h3v3h-3z" fill="#ff3a1c"/>'],
    cRegion: [16, '<path d="M1 3H16M3 0V16" stroke="#e6e6e6"/><path d="M3 14V8Q5 3 9 3H14V14Z" fill="#b4dcf4" stroke="#4a8fe8"/>' + knob(3, 14) + knob(14, 14) + knob(14, 3) + knob(8, 3)],
    cErase: [16, '<path d="M2 9L11 1M6 11L14 3" stroke="#ddd" stroke-dasharray="3 1"/><path d="M0 8V12H4ZM10 0H14V4Z" fill="#ccc"/><rect x="5" y="5" width="4" height="4" fill="none" stroke="#ddd"/><path d="M9 9L15 15M15 9L9 15" stroke="#ff3a12" stroke-width="2.200"/>'],
    hide: [32, '<rect x="7" y="1" width="24" height="24" fill="url(#silver)" stroke="#2b2e33"/><rect x="2" y="6" width="24" height="24" fill="url(#silver)" stroke="#2b2e33"/><path d="M7 6V25H26V7H7" fill="none" stroke="#2f8fff"/>'],
    section: [16, '<path d="M1 1V15M1 2H5M1 14H5" stroke="#ccc" stroke-dasharray="3 1"/><path d="M5 0L8 2L5 4ZM5 12L8 14L5 16Z" fill="#ccc"/><text x="5" y="11" font-size="6" font-weight="700" fill="#ccc">A-A</text>'],
    detailView: [16, '<circle cx="9.500" cy="9.500" r="5.500" fill="none" stroke="#ddd" stroke-width="1.600"/><path d="M7 7V13M11 7V11M7 10H11V7" stroke="#222" fill="none" stroke-width="1.500"/><path d="M1 8V13M6 2H10" stroke="#ddd"/><text x="0" y="6" font-size="7" fill="#ddd">A</text>'],
    breakView: [16, '<rect x=".5" y=".5" width="15" height="15" fill="#f0f2f6" stroke="#222"/><path d="M2 4H10Q14 8 10 12H2" fill="#d3d7e0" stroke="#24283a" stroke-width="2"/><path d="M2 8H9" stroke="#24283a"/>'],
    move: [16, '<path d="M8 0L10.500 3.500H5.500ZM8 16L10.500 12.500H5.500ZM0 8L3.500 5.500V10.500ZM16 8L12.500 5.500V10.500Z" fill="#e8e8e8"/><path d="M8 3V5M8 11V13M3 8H5M11 8H13" stroke="#e8e8e8" stroke-width="2"/><rect x="6" y="6" width="4" height="4" fill="#333" stroke="#7db4ff"/>'],
    copy: [16, '<circle cx="5" cy="4" r="3.800" fill="url(#silver)"/><path d="M10 2H14V6M12 5L14 7L16 5" fill="none" stroke="#ddd"/><circle cx="12" cy="12" r="4" fill="url(#sky)"/>' + flash(1, 8)],
    stretch: [16, '<path d="M1 .5H8V15.500H1Z" fill="#fff" stroke="#222"/><path d="M8 .5H10L15.500 15.500H8Z" fill="url(#sky)" stroke="#25426e"/><path d="M4 11H10" stroke="#111" stroke-width="1.600"/><path d="M8 8L11.500 11L8 14Z" fill="#111"/>'],
    rotate: [16, '<circle cx="8" cy="9" r="6" fill="none" stroke="#d8d8d8" stroke-width="1.600"/><path d="M6 0L12 3L6 6Z" fill="#4a93f5"/>'],
    mirror: [16, '<path d="M6.500 2V14H0Z" fill="#eceef2"/><path d="M9.500 2V14H16Z" fill="#8cb6ee"/><path d="M8 0V16" stroke="#ddd"/>'],
    scale: [16, '<rect x=".5" y=".5" width="15" height="15" fill="url(#sky)" stroke="#21304a"/><rect x="1" y="6" width="9" height="9" fill="url(#silver)" stroke="#333"/>'],
    array: [16, '<rect x="1" y="1" width="5" height="5" fill="#fff" stroke="#222"/><path d="M9.500 .5H15.500V6.500H9.500ZM.5 9.500H6.500V15.500H.5ZM9.500 9.500H15.500V15.500H9.500Z" fill="#a9c8f4" stroke="#4a8fe8"/>'],
    trim: [16, '<path d="M0 8H5" stroke="#ddd"/><path d="M3 14L9 2" stroke="#5fa4ff" stroke-width="1.300"/><path d="M9 8H16" stroke="#5fa4ff" stroke-dasharray="2 1"/>'],
    fillet: [16, '<path d="M1 15.500V1H5Q14 2 15 11V15.500Z" fill="url(#silver)" stroke="#22252b"/><path d="M5 1Q14 2 15 11" fill="none" stroke="#5fa4ff" stroke-width="1.500"/>'],
    eraser: [16, flash(0, 0) + '<path d="M6 10L14 1L16 3L8 12Z" fill="#e9c28a" stroke="#5a3c14" stroke-width=".6"/><path d="M3 14Q4 9 7 10Q9 12 3 14Z" fill="#d8481c"/><path d="M0 15.500H4M10 15.500H16" stroke="#ddd"/>'],
    explode: [16, '<path d="M1 6L4 4H12L9 6Z" fill="#fff"/><path d="M1 6H9V13H1Z" fill="#8fb4e4"/><path d="M9 6L12 4V11L9 13ZM12 4L16 2V9L12 12Z" fill="#c9dcf5"/><path d="M8 1L13 0L11 4Z" fill="#dfe9f8"/>'],
    offset: [16, '<path d="M0 12.500H5V9Q2 2 8 1.500Q14 2 11 9V12.500H16" fill="none" stroke="#5fa4ff" stroke-width="1.400"/><path d="M0 15.500H16M7 12V8Q5 5 8 4.500Q11 5 9 8V12" fill="none" stroke="#ddd"/>'],
    lyProps: [16, stack() + '<circle cx="12" cy="12" r="3" fill="none" stroke="#0b66c8" stroke-width="2"/><path d="M12 8V16M8 12H16" stroke="#0b66c8"/>'],
    lyIso: [16, stack() + '<path d="M5 3H16L11 7H0Z" fill="#79a9e8"/><circle cx="8" cy="2.500" r="2" fill="#ddd"/>'],
    lyMatch: [16, stack() + '<path d="M8 12L13 9L15 12L10 16Z" fill="#e07a1c" stroke="#7a3c00" stroke-width=".5"/>'],
    lyPrev: [16, '<g transform="translate(1 2)">' + stack() + '</g><path d="M1 5V1H6M3 0L0 2" fill="none" stroke="#ddd"/>'],
    lyDown: [16, stack("#79b4f5") + '<path d="M15 10L11 15M11 12V15H14" fill="none" stroke="#ddd"/>'],
    lyUp: [16, stack("#79b4f5") + '<path d="M11 15L15 11M12 11H15V14" fill="none" stroke="#ddd"/>'],
    lyFreeze: [16, '<path d="M4 2H12L7 6H-1Z" fill="#fff" stroke="#222" stroke-width=".5"/><path d="M11 6V16M6.500 8.500L15.500 13.500M15.500 8.500L6.500 13.500" stroke="#cfe4ff" stroke-width="1.800"/>'],
    lyOff: [16, '<path d="M4 2H12L7 6H-1Z" fill="#fff" stroke="#222" stroke-width=".5"/><circle cx="12" cy="7" r="3.500" fill="#8cc4f8"/><path d="M11 10H13V15H11Z" fill="#cde"/>'],
    bulb: [16, '<circle cx="8" cy="6" r="4.500" fill="#ffe9a0"/><circle cx="8" cy="5" r="2.500" fill="#fffbe6"/><path d="M6 9H10V12H6Z" fill="#f5cf70"/><path d="M6.500 12H9.500V15H6.500Z" fill="#c6c9ce"/>'],
    sun: [16, '<circle cx="8" cy="8" r="4" fill="#ffe7a3"/><path d="M8 0V2.500M8 13.500V16M0 8H2.500M13.500 8H16M2.500 2.500L4.200 4.200M13.500 2.500L11.800 4.200M2.500 13.500L4.200 11.800M13.500 13.500L11.800 11.800" stroke="#f4d98e" stroke-width="1.200"/>'],
    unlock: [16, '<rect x="1.500" y="8" width="9" height="6.500" fill="#ffe08a" stroke="#5a4410"/><path d="M8 8V5Q8 2 11 2Q14 2 14 5" fill="none" stroke="#f0e2b8" stroke-width="1.600"/><path d="M6 10V12" stroke="#222"/>'],
    layerBox: [16, '<rect x="1.500" y="1.500" width="13" height="10" fill="none" stroke="#d4d4d4"/><path d="M1 14.500H15" stroke="#d4d4d4"/>'],
    moveLayer: [16, '<path d="M0 6L3 2L5 6M5 1L8 4" stroke="#eee" fill="none"/><circle cx="6" cy="5" r="2.500" fill="none" stroke="#eee"/><path d="M11 2H14V5M12 5H16L14 7Z" fill="none" stroke="#ddd"/><path d="M8 10H16L12 13H5Z" fill="#fff"/><path d="M8 12H16L12 15.500H5Z" fill="#5fa4f0" stroke="#223" stroke-width=".5"/>'],
    text: [32, '<path d="M3 31L13 3H19L29 31H25.500L22 22H10L6.500 31ZM11 19H21L16 5.500Z" fill="#b9b9b9" stroke="#444" stroke-width=".6"/>'],
    dimension: [16, '<path d="M.5 1V14M15.500 1V10M1 5.500H15M1 5.500L4 3.500V7.500ZM15 5.500L12 3.500V7.500Z" stroke="#ccc" fill="#ccc"/>' + flash(8, 8)],
    symbol: [16, '<path d="M1 15V13L5 6H8" fill="none" stroke="#bbb"/><path d="M8 9L11.500 1L15 9M9.500 6H13.500" fill="none" stroke="#bbb" stroke-width="1.500"/>'],
    bom: [16, '<circle cx="8" cy="8" r="6" fill="#eaf2ff" stroke="#5f9ff5" stroke-width="1.500"/><path d="M0 0L16 16M16 0L0 16" stroke="#5f9ff5"/>'],
    insert: [32, `<path d="M14 1H25L30 6V22H14Z" fill="url(#sky)" stroke="#203a66"/><path d="M25 1V6H30" fill="#fff" stroke="#203a66"/><rect x="3" y="10" width="19" height="13" ${paper}/><circle cx="21" cy="23" r="7" fill="#d8dbe2" fill-opacity=".85" stroke="#2b2e33"/>` + knob(3, 23)],
    blockMake: [16, `<rect x="3" y="3" width="10" height="7" ${paper}/><circle cx="12" cy="10" r="3.500" ${paper}/>` + knob(2, 11)],
    blockFlash: [16, `<rect x="4" y="5" width="8" height="6" ${paper}/><circle cx="10" cy="12" r="3" ${paper}/>` + knob(2, 13) + flash(9, 0)],
    blockEdit: [16, '<path d="M1 4L4 3H9" fill="none" stroke="#222"/><path d="M2 4L8 13L14 8V5" fill="none" stroke="#eee" stroke-width="1.300"/><path d="M4 7L8 12L12 8Z" fill="#fff"/><path d="M7 9L13 1L15.500 3L10 10L6.500 11Z" fill="#f08a2c" stroke="#222" stroke-width=".6"/>'],
    group: [32, '<path d="M.5 .5H19.500V31.500H.5Z" fill="none" stroke="#d5d5d5" stroke-dasharray="2 1.500"/><rect x="5" y="5" width="10" height="10" fill="#f3eaa0" stroke="#222"/><circle cx="10" cy="23" r="5" fill="#e8eef0" stroke="#222"/><path d="M20 11L18 0L21 9L27 1L23 9L32 11L24 13L29 21L22 14L20 23L18 14L10 21L16 12L8 10L17 9L12 3Z" fill="#d6eeff" stroke="#74b7ee" stroke-width=".7"/><circle cx="20" cy="11" r="3.500" fill="#fff"/>'],
    groupEdit: [16, '<path d="M1 .5H11" stroke="#ddd" stroke-dasharray="2 1"/><rect x="3" y="3" width="5" height="4" fill="#f3eaa0" stroke="#222" stroke-width=".6"/><circle cx="5" cy="12" r="2.500" fill="#e0e6ea"/><path d="M9 8L14 2L16 4L11 10Z" fill="#f0b32c"/>'],
    groupAdd: [16, '<path d="M.5 .5H8.500V14.500H.5Z" fill="none" stroke="#ddd" stroke-dasharray="2 1"/><rect x="3" y="3" width="3.500" height="3.500" fill="none" stroke="#eee"/><circle cx="5" cy="11" r="2" fill="#9cc6f5"/><path d="M10 5H16M13 2V8M11 11.500H16" stroke="#ddd"/>'],
    groupPick: [16, '<path d="M.5 .5H9.500V14.500H.5Z" fill="none" stroke="#5fa4ff" stroke-dasharray="2 1"/><rect x="3" y="3" width="4" height="4" fill="#f3eaa0"/><circle cx="5" cy="11" r="2" fill="#ddd"/><path d="M9 4V14L11 12L13 16L14 15L13 11H15.500Z" fill="#fffbe0" stroke="#222" stroke-width=".5"/>'],
    measure: [32, '<path d="M1.500 7V18M30.500 7V18M3 12.500H29" stroke="#eee" stroke-width="1.200"/><path d="M2 12.500L6 10V15ZM30 12.500L26 10V15Z" fill="#eee"/><rect x="1.500" y="20.500" width="29" height="6" fill="#f0cc34" stroke="#5e4a08"/><path d="M5 21V23.500M9 21V23.500M13 21V23.500M17 21V23.500M21 21V23.500M25 21V23.500" stroke="#5e4a08"/>'],
    point: [16, '<path d="M0 6.500H5M9 6.500H11M6.500 0V4M6.500 9V14" stroke="#eee" stroke-width="1.300"/><circle cx="6.500" cy="6.500" r="2" fill="none" stroke="#eee"/><rect x="9" y="8" width="6" height="7.500" fill="#eee"/><path d="M10 10.500H14M10 12.500H14M10 14.500H14" stroke="#333"/>' + flash(9, -1)],
    magnet: [16, '<path d="M2 13V7Q2 2 6 2Q10 2 10 7V13" fill="none" stroke="#e8474b" stroke-width="2.400"/><path d="M.5 11H3.500V14H.5ZM8.500 11H11.500V14H8.500Z" fill="#ddd"/>' + flash(9, 7)],
    calc: [16, '<rect x="3" y="1" width="11" height="14" fill="#f0f1f4" stroke="#222"/><rect x="5" y="3" width="7" height="2.500" fill="#555"/><path d="M5 8H12M5 10.500H12M5 13H12" stroke="#444" stroke-width="1.400" stroke-dasharray="1.500 1.200"/>'],
    paste: [32, `<rect x="3" y="3" width="22" height="27" rx="1" fill="#b0a597" stroke="#2b2723"/><path d="M8 5V2H11L12 0H16L17 2H20V5Z" ${paper}/><path d="M11 9H22L28 15V31H11Z" ${paper}/><path d="M22 9V15H28" fill="none" stroke="#2b2e33"/>`],
    cut: [16, '<path d="M2 1L10 10M14 1L6 10" stroke="#eee" stroke-width="1.600"/><circle cx="4" cy="12.500" r="2.200" fill="none" stroke="#222" stroke-width="1.600"/><circle cx="12" cy="12.500" r="2.200" fill="none" stroke="#222" stroke-width="1.600"/>'],
    copyClip: [16, `<path d="M1 1H9V12H1Z" ${paper}/><path d="M4 3H11L15 7V15.500H4Z" ${paper}/>`],
    matchClip: [16, '<rect x="1" y="0" width="12" height="15" fill="#e9ecf2" stroke="#222"/><rect x="3" y="2" width="6" height="6" fill="#3c6ea8"/><path d="M6 12L13 8L15 12L9 16Z" fill="#e07a1c" stroke="#7a3c00" stroke-width=".5"/>'],
    base: [32, `<path d="M3 6.500H13.500V12.500H28.500V25.500H3Z" ${paper}/>`],
    launcher: [8, '<path d="M2 2L6 6M6.500 2.500V6.500H2.500" fill="none" stroke="#eee" stroke-width="1.300"/>'],
    docMin: [12, '<rect x="1" y="7" width="10" height="3" fill="#e8e8e8"/>'],
    docRestore: [12, '<path d="M3.500 1.500H10.500V8.500" fill="none" stroke="#eee" stroke-width="1.600"/><rect x="1.500" y="4" width="6.500" height="6.500" fill="none" stroke="#eee" stroke-width="2"/>'],
    docClose: [12, '<path d="M2 2L10 10M10 2L2 10" stroke="#eee" stroke-width="2.400"/>'],
    wcsCaret: [9, '<path d="M.5 2H8.500L4.500 7Z" fill="#a9a9b4" stroke="#72727e" stroke-width=".8"/>'],
    cmdClose: [12, '<path d="M2 2L10 10M10 2L2 10" stroke="#d4d4d4" stroke-width="1.800"/>'],
    wrench: [16, '<path d="M2 4L5 6L6 3L4 1Q9 0 9 5L15 12Q15 15 12 14L6 8Q2 9 2 4Z" fill="#d8d8d8" stroke="#333" stroke-width=".6"/>'],
    prompt: [16, '<rect x=".5" y="1.500" width="15" height="13" fill="#b6bcc4" stroke="#5a6e84"/><path d="M3 5L6.500 8L3 11M8 11.500H13" fill="none" stroke="#333" stroke-width="1.300"/>'],
    plusSmall: [10, '<path d="M5 1V9M1 5H9" stroke="#c4c4c4" stroke-width="1.800"/>'],
    ortho: [18, '<path d="M4.500 3V15.500H16M5 10.500H9.500V15" fill="none" stroke="#b9b9b9"/>'],
    polar: [18, '<circle cx="8" cy="9.500" r="6" fill="none" stroke="#bbb" stroke-width="1.300"/><path d="M8 9.500H16M8 9.500L14 3" stroke="#bbb"/>'],
    iso: [18, '<path d="M1 1L17 17M9.500 0V18" stroke="#aaa" stroke-width="1.400"/>'],
    track: [18, '<path d="M16 3L2 15.500H17" fill="none" stroke="#2b8cff" stroke-width="1.600"/><circle cx="9" cy="9.500" r="1.700" fill="#2b8cff"/>'],
    osnap: [18, '<rect x="3.500" y="3.500" width="13" height="12" fill="none" stroke="#2b8cff" stroke-width="1.400"/><rect x="1" y="1" width="5" height="5" fill="#0d3d0d"/><rect x="2" y="2" width="3" height="3" fill="#0f0"/>'],
    lweight: [18, '<path d="M1 3.500H17M1 7H9M11 7H17" stroke="#ccc"/><path d="M1 11H17" stroke="#ccc" stroke-width="2"/><path d="M1 15H12" stroke="#ccc" stroke-width="3"/>'],
    gear: [18, '<circle cx="9" cy="9" r="3.500" fill="none" stroke="#c4c4c4" stroke-width="3"/><circle cx="9" cy="9" r="5.200" fill="none" stroke="#c4c4c4" stroke-width="1.800" stroke-dasharray="2.200 1.880"/>'],
    plus: [18, '<path d="M9 2V16M2 9H16" stroke="#c4c4c4" stroke-width="1.500"/>'],
    quick1: [18, '<path d="M2 2H8V16H2ZM9 9H16V16H9Z" fill="#b6b6b6"/><path d="M2 9H8" stroke="#777"/>'],
    quick2: [18, '<path d="M1 4H6M3.500 1.500V6.500M5 6V14M5 13H9M8 5H15V9" stroke="#c4c4c4" fill="none" stroke-width="1.500"/><rect x="10" y="10" width="7" height="6" fill="#c9c9c9"/><path d="M11.500 10V8.500Q13.500 6 15.500 8.500V10" fill="none" stroke="#c9c9c9"/>'],
    quick3: [18, '<path d="M3 2H11V12H3ZM6 2V9M8.500 2V9" fill="none" stroke="#3d8bff" stroke-width="1.400"/><rect x="9" y="10" width="8" height="6" fill="#3d8bff"/><path d="M10.500 10V8.500Q13 5.500 15.500 8.500V10" fill="none" stroke="#3d8bff" stroke-width="1.300"/>'],
    shapes: [18, '<rect x="2" y="2" width="6" height="6" fill="none" stroke="#c4c4c4"/><circle cx="13" cy="6.500" r="3" fill="none" stroke="#c4c4c4"/><path d="M4.500 16L8 10L11.500 16Z" fill="none" stroke="#c4c4c4"/>'],
    hw: [18, '<circle cx="9" cy="9" r="8" fill="#075a9e" stroke="#1d8cf0" stroke-width="1.400"/><path d="M9 12L13 8" stroke="#2fa4ff"/>'],
    python: [18, '<path d="M3 1H11V6H3Z" fill="#f0f0f0"/><path d="M5 5H12V11H4V8H8" fill="#3d79b4"/><path d="M3 10H10V15H3ZM10 7H14V12H10Z" fill="#ffd94a"/><path d="M9 13L12 16L17 11" fill="none" stroke="#3aa52a" stroke-width="2"/>'],
    graph: [18, '<rect x="0" y="1" width="18" height="16" fill="#f4f4f4" stroke="#222"/><path d="M1 13Q5 -1 9 7T17 13" fill="none" stroke="#222" stroke-width="1.300"/><path d="M14 10L18 17H10Z" fill="#e8601c"/>'],
    menu: [18, '<path d="M1 4H17M1 9H17M1 14H17" stroke="#c9c9c9" stroke-width="1.600"/>'],
    windows: [24, '<path d="M4 6.500L10.500 5.600V11.500H4ZM11.500 5.400L20 4.200V11.500H11.500ZM4 12.500H10.500V18.400L4 17.500ZM11.500 12.500H20V19.800L11.500 18.600Z" fill="#000"/>'],
    search: [24, '<circle cx="13" cy="9.500" r="5.500" fill="none" stroke="#111" stroke-width="1.300"/><path d="M9 13.500L3 20" stroke="#111" stroke-width="1.500"/>'],
    edge: [24, '<path d="M2 11Q3 1 13 1Q22 2 22 11V14H8Q9 19 14 19Q18 19 21 17V21Q18 23 13 23Q4 22 4 14Q4 10 8 7Q5 8 2 11ZM8 10H16Q16 6 12 6Q9 6 8 10Z" fill="#0078d7"/>'],
    explorer: [24, '<path d="M1 3H9L11 5H22V20H1Z" fill="#ffd869"/><path d="M1 3H9L10 5H1Z" fill="#d99a12"/><path d="M4 20V13H20V20H16V16H8V20Z" fill="#3a9ce8"/>'],
    word: [24, '<rect x="12" y="3.500" width="11" height="17" fill="#fff" stroke="#2b579a"/><path d="M14 7H21M14 9.500H21M14 12H21M14 14.500H21M14 17H21" stroke="#2b579a"/><path d="M1 3L14 1V23L1 21Z" fill="#2b579a"/><text x="7.500" y="16" font-size="10" font-weight="700" text-anchor="middle" fill="#fff">W</text>'],
    coccoc: [24, '<circle cx="12" cy="12" r="11.500" fill="#f3faf0"/><path d="M13 1.500A10.500 10.500 0 1 0 22.500 12H17A5 5 0 1 1 11 7Z" fill="#5fb83c"/><circle cx="12" cy="12" r="2.500" fill="#5fb83c"/><path d="M14 1L15 6M18 1L16 7M22 4L17 8" stroke="#f05a3c" stroke-width="1.600"/>'],
    acad: [24, '<rect width="24" height="24" fill="#f7dcd4"/><path d="M3 22L10 2H16L21 22H15.500L14.500 18H9.500L8 22ZM10.500 14H14L12.500 8Z" fill="#b5161c"/><path d="M3 22L10 2H13L7 22Z" fill="#e0393c"/>'],
    chevron: [18, '<path d="M3 12L9 6L15 12" fill="none" stroke="#111" stroke-width="1.500"/>'],
    battery: [18, '<rect x="5.500" y="5.500" width="10" height="8" fill="none" stroke="#111" stroke-width="1.400"/><path d="M16 8H17.500V11H16ZM7 8H10V12H7Z" fill="#111"/><path d="M1 5H6M2 3V5M5 3V5M1.500 5Q2 8 3.500 8T5.500 5M3.500 8V11H6" fill="none" stroke="#111"/>'],
    wifi: [18, '<path d="M4 16A12 12 0 0 1 16 4M7 16A9 9 0 0 1 16 7.500M10 16A6 6 0 0 1 16 10.500" fill="none" stroke="#111" stroke-width="1.200"/><path d="M1.500 16A14 14 0 0 1 16 1.500" fill="none" stroke="#999"/><circle cx="14.500" cy="14.500" r="1.500" fill="#111"/>'],
    sound: [18, '<path d="M2 7H4.500L8 4V14L4.500 11H2Z" fill="none" stroke="#111" stroke-width="1.200"/><path d="M10 7Q11.500 9 10 11M12 5.500Q14.500 9 12 12.500" fill="none" stroke="#111"/><path d="M14 4Q17.500 9 14 14" fill="none" stroke="#999"/>'],
    note: [18, '<path d="M1 2H17V14H11L9 17L7 14H1Z" fill="#000"/><path d="M4 5.500H14M4 8H14M4 10.500H10" stroke="#dde2ee"/>'],
    pc: [48, '<path d="M12 4H60V30H12Z" fill="#3f88c4" stroke="#244"/><path d="M2 33L22 28V40Z" fill="#c9d4dc"/>'],
    bin: [48, '<path d="M4 8L20 2H40V42H12Z" fill="#e2eaf0" stroke="#b8c4cc"/><path d="M10 22L14 16L18 22M8 26L12 32H18" fill="none" stroke="#2d7fd4" stroke-width="3"/>'],
    anydesk: [48, '<rect width="48" height="44" fill="#ef443b"/><path d="M8 22L24 8V36Z" fill="#fff"/>' + arrow],
    arm: [48, '<path d="M1 20Q1 4 8 3L13 5L9 13Q14 10 22 18L20 26H6Z" fill="#e9b88c" stroke="#a66b3c"/><path d="M10 12L24 6V34H14Z" fill="#c8282c"/><circle cx="20" cy="28" r="6" fill="#f0d020"/>' + arrow],
    chrome: [48, '<circle cx="24" cy="24" r="24" fill="#2f9e4c"/><path d="M4 11A24 24 0 0 1 44 11L24 24Z" fill="#e0352b"/><circle cx="24" cy="24" r="11" fill="#fff"/><circle cx="24" cy="24" r="9" fill="#3b7de0"/>' + arrow],
    idm: [48, '<circle cx="22" cy="14" r="10" fill="#46611c"/><path d="M1 22Q-2 8 16 5Q6 12 8 24L30 30V36Q4 34 1 22Z" fill="#e8d020"/><path d="M4 20Q3 10 14 7" stroke="#d8281c" stroke-width="3" fill="none"/><path d="M2 24Q6 32 30 34" stroke="#3cb43c" stroke-width="3" fill="none"/>' + arrow],
    ultra: [48, '<circle cx="24" cy="24" r="24" fill="#2a6fd0"/><rect x="15" y="14" width="20" height="16" rx="2" fill="none" stroke="#dfe9f8" stroke-width="3"/>' + arrow],
    coc: [48, '<circle cx="24" cy="24" r="24" fill="#e8f5e0"/><circle cx="24" cy="24" r="22" fill="#7cc142"/><circle cx="24" cy="24" r="11" fill="none" stroke="#fff" stroke-width="5"/>' + arrow],
    excel: [48, '<path d="M3 5L28 0V46L3 42Z" fill="#1f7244"/><path d="M10 14L18 30M18 14L10 30" stroke="#fff" stroke-width="3"/>' + arrow],
};

const Icon = ({ name, size = 16 }) =>
    h("svg", {
        viewBox: `0 0 ${icons[name][0]} ${icons[name][0]}`,
        width: size,
        height: size,
        innerHTML: icons[name][1],
        "aria-hidden": "true",
    });
Icon.props = ["name", "size"];

const activeTab = ref("Home");
const tabs = ["Home", "Insert", "Annotate", "Parametric", "Content", "View", "Manage", "Output", "Add-ins", "A360", "Express Tools", "Featured Apps"];
const layouts = ["Model", "Layout1", "Layout2"];

const quick = [
    { icon: "new" }, { icon: "open" }, { icon: "save" }, { icon: "saveas" }, { icon: "print" },
    { icon: "undo", caret: true }, { icon: "redo", caret: true, dim: true }, { icon: "workspace", caret: true },
];

const shortcuts = [
    { name: "This PC", icon: "pc" },
    { name: "Recycle Bin", icon: "bin" },
    { name: "AnyDesk", icon: "anydesk" },
    { name: "BatteryMon", icon: "arm" },
    { name: "Google Chrome", icon: "chrome" },
    { name: "Internet Download", icon: "idm" },
    { name: "UltraView", icon: "ultra" },
    { name: "Cốc Cốc", icon: "coc" },
    { name: "Excel 2016", icon: "excel" },
];

const modify = [
    [{ icon: "move", label: "Move", caret: true }, { icon: "copy", label: "Copy", caret: true }, { icon: "stretch", label: "Stretch" }],
    [{ icon: "rotate", label: "Rotate" }, { icon: "mirror", label: "Mirror" }, { icon: "scale", label: "Scale" }],
    [{ icon: "array", label: "Array", caret: true }, { icon: "trim", label: "Trim", caret: true }, { icon: "fillet", label: "Fillet", caret: true }],
    [{ icon: "eraser" }, { icon: "explode" }, { icon: "offset" }],
];
const layerIcons = ["lyProps", "lyIso", "lyMatch", "lyPrev", "lyDown", "lyUp", "lyFreeze", "lyOff"];

// groups > cells > buttons, "v" is a drop-down arrow
const status = [
    [["MODEL"]],
    [["ortho", "polar", "v", "iso", "v"], ["track", "osnap", "v"], ["lweight"]],
    [["gear", "v"], ["plus"]],
    [["quick1", "quick2", "quick3"], ["shapes"]],
    [["hw"]],
    [["python", "graph"]],
    [["menu"]],
];

const tasks = [
    { icon: "windows" }, { icon: "search" }, { icon: "edge" }, { icon: "explorer", state: "open" },
    { icon: "word" }, { icon: "coccoc" }, { icon: "acad", state: "current" },
];

const belts = [
    [461, 539.5, 568], [465, 545.5, 572], [461, 551.5, 568], [465, 557.5, 572], [461, 563.5, 568], [465, 569.5, 574], [461, 576.5, 569],
];

// x, y, colour and height of every small flow arrow
const marks = [];
const add = (color, list, size = 2) => list.forEach(([x, y]) => marks.push([x, y, color, size]));
for (let c = 0; c < 9; c++) {
    for (let r = 0; r < 7; r++) {
        add("#00e5ee", [[353 + c * 10.1, 446 + r * 4.6 + (c % 2) * 2]], 1);
    }
}
for (const x of [356, 365, 373]) add("#f00", [[x, 390], [x, 394], [x, 400], [x, 405], [x, 410], [x - 1, 414]], 1);
for (const x of [353, 363, 372]) add("#f4f400", [[x, 392], [x, 400], [x, 407], [x, 412]], 1);
add("#f00", [
    [1220, 380], [1226, 387], [1226, 391], [1226, 396], [1242, 379], [1244, 380], [1255, 379], [1248, 384], [1258, 384], [1270, 384], [1243, 396], [1250, 396],
    [1243, 400], [1250, 400], [1257, 417], [1263, 417], [1270, 417], [1242, 428], [1253, 428], [1264, 428], [1242, 441], [1253, 441], [1264, 441],
    [1272, 439], [1272, 452], [1264, 458], [1242, 465], [1251, 465],
], 1);
add("#f4f400", [
    [1226, 381], [1235, 404], [1267, 404], [1279, 404], [1282, 395], [1190, 412], [1205, 412], [1224, 412], [1239, 412], [1259, 412], [1274, 412],
    [1266, 424], [1231, 431], [1240, 433], [1254, 433], [1266, 433], [1231, 441], [1241, 446], [1254, 446], [1265, 446], [1220, 446], [1220, 452],
    [1223, 451], [1231, 452], [1241, 453], [1254, 453], [1265, 453],
]);
add("#0f0", [[1219, 435], [1220, 438]]);
add("#fff", [[1240, 382], [1203, 404], [1247, 419], [1282, 397]], 1);
add("#00e5ee", [[1299, 393], [1299, 398], [1299, 402], [1299, 407], [1299, 411], [1299, 416], [1299, 420]], 1);
add("#00e5ee", [[708, 582], [735, 563], [745, 558], [753, 552], [761, 548], [770, 542], [780, 537], [790, 546], [794, 545], [772, 558], [757, 570]], 1);
</script>

<style>
body {
    margin: 0;
    overflow: hidden;
}
</style>

<style scoped>
.screen {
    height: 100vh;
    display: flex;
    flex-direction: column;
    font-family: "Noto Sans", "Open Sans", sans-serif;
    font-size: 12px;
    color: #f0f0f0;
}

button {
    font: inherit;
    color: inherit;
    background: none;
    border: none;
    padding: 0;
    margin: 0;
    cursor: pointer;
    display: flex;
    align-items: center;
    white-space: nowrap;
}

svg {
    display: block;
    flex: none;
}

.defs {
    position: absolute;
}

.desktop {
    flex: 1;
    position: relative;
    overflow: hidden;
    background: linear-gradient(90deg, #00aaf8 0%, #00a4f2 20%, #0080dc 48%, #0058c8 72%, #0440b4 90%, #043cb0 100%);
}

.peek {
    position: absolute;
    left: 168px;
    top: 7px;
    width: 43px;
    height: 3px;
    background: #1c3a5c;
}

.shortcuts {
    display: flex;
    flex-direction: column;
    width: 76px;
}

.shortcut {
    height: 93px;
    flex: none;
    display: flex;
    flex-direction: column;
    align-items: center;
    margin-left: 4px;
    padding-top: 6px;
    box-sizing: border-box;
    line-height: 15px;
    color: #fff;
    text-align: center;
    text-shadow: 0 1px 2px #000, 0 0 2px #000;
}

.window {
    position: absolute;
    inset: 9px 29px 8px 32px;
    display: flex;
    flex-direction: column;
    background: #383838;
    box-shadow: 0 0 8px rgba(0, 0, 0, 0.45);
}

.caret {
    width: 0;
    height: 0;
    flex: none;
    border: 3px solid transparent;
    border-top-color: #f2f2f2;
    border-bottom: none;
}

.caret.dim {
    border-top-color: #aaa;
}

.caret.dark {
    border-top-color: #555;
}

.big-caret,
.status-caret {
    border-width: 4px 4px 0;
}

.ic {
    justify-content: center;
}

/* title bar */
.titlebar {
    height: 32px;
    flex: none;
    box-sizing: border-box;
    display: flex;
    align-items: flex-end;
    background: #fff;
    border-bottom: 1px solid #2b2b2b;
}

.app-button {
    position: absolute;
    left: 0;
    top: 7px;
    z-index: 2;
    width: 41px;
    height: 41px;
    border: 1px solid #111;
    box-sizing: border-box;
    background: linear-gradient(#e2e2e2, #8d8d8d);
}

.quick {
    width: 290px;
    height: 24px;
    box-sizing: border-box;
    padding-left: 49px;
    display: flex;
    align-items: center;
    gap: 8px;
    background: linear-gradient(#888, #5c5c5c);
    border: 1px solid #555;
    border-width: 1px 1px 0;
}

.quick .caret {
    margin: 0 -2px;
}

.title {
    flex: 1;
    align-self: center;
    margin: 0;
    display: flex;
    justify-content: center;
    gap: 16px;
    font-size: 12px;
    font-weight: 400;
    line-height: 16px;
    color: #111;
    white-space: nowrap;
}

.infocenter {
    width: 446px;
    height: 24px;
    box-sizing: border-box;
    display: flex;
    align-items: center;
    gap: 6px;
    padding-right: 5px;
    background: linear-gradient(#8e8e8e, #5e5e5e);
    border: 1px solid #555;
    border-width: 1px 1px 0;
}

.play {
    width: 13px;
    height: 100%;
    justify-content: center;
    margin-right: -6px;
}

.tri-right {
    border: 4px solid transparent;
    border-left-color: #fff;
    border-right: none;
}

.search {
    width: 180px;
    height: 22px;
    box-sizing: border-box;
    padding: 0 3px;
    font: italic 12px "Noto Sans", sans-serif;
    color: #fff;
    background: #6f6f6f;
    border: 1px solid #2e2e2e;
}

.search::placeholder {
    color: #c4c4c4;
    opacity: 1;
}

.signin {
    flex: 1;
    gap: 5px;
}

.signin .caret {
    margin-left: auto;
    margin-right: 6px;
}

.divider {
    width: 1px;
    height: 22px;
    background: #9a9a9a;
    margin-right: 4px;
}

.win-controls {
    display: flex;
    align-self: flex-start;
    margin-left: 26px;
}

.win-controls button {
    width: 46px;
    height: 28px;
    justify-content: center;
}

/* ribbon tabs */
.tabs {
    height: 19px;
    flex: none;
    box-sizing: border-box;
    display: flex;
    padding: 1px 0 0 46px;
    background: #535353;
    border-right: 1px solid #2b2b2b;
}

.tabs button {
    padding: 0 8px 2px;
    color: #d0d0d0;
    border: 1px solid transparent;
    border-bottom: none;
}

.tabs .active {
    color: #f4f4f4;
    background: linear-gradient(#7a7a7a, #5d5d5d);
    border-color: #2e2e2e;
}

.tabs .min-ribbon {
    margin-left: 18px;
    gap: 4px;
}

/* ribbon */
.ribbon {
    height: 97px;
    flex: none;
    display: flex;
    overflow: hidden;
    border-top: 1px solid #2b2b2b;
    border-bottom: 4px solid #5c5c5c;
    padding-left: 2px;
    background: linear-gradient(#505050, #3a3a3a);
}

.panel {
    flex: none;
    box-sizing: border-box;
    display: flex;
    flex-direction: column;
    background: #5b5b5b;
    border-right: 1px solid #3c3c3c;
    box-shadow: inset 1px 0 #686868;
}

.draw { width: 230px; }
.construction { width: 171px; }
.detail { width: 99px; }
.modify { width: 238px; }
.layers { width: 214px; }
.annotation { width: 157px; }
.block { width: 93px; }
.groups { width: 69px; }
.utilities { width: 108px; }
.clipboard { width: 80px; }
.view { width: 61px; }

.panel footer {
    height: 18px;
    display: flex;
    align-items: center;
    justify-content: center;
    gap: 6px;
    background: linear-gradient(#4c4c4c, #454545);
}

.tools {
    flex: 1;
    display: flex;
    padding: 4px 0 0 2px;
}

.big {
    flex-direction: column;
    padding-top: 2px;
    line-height: 15px;
    text-align: center;
}

.big > span {
    margin: 4px 0;
}

.side {
    position: relative;
}

.side .caret {
    position: absolute;
    right: -8px;
    top: 14px;
}

.w38 { width: 38px; }
.w40 { width: 40px; }
.w44 { width: 44px; }
.w48 { width: 48px; }
.w52 { width: 52px; }
.w60 { width: 60px; }
.w70 { width: 70px; }
.w88 { width: 88px; }

.col {
    display: flex;
    flex-direction: column;
}

.small {
    height: 24px;
    gap: 5px;
}

.small .caret {
    margin-left: 2px;
}

.draw .col {
    margin-left: 5px;
}

.construction .col {
    margin-left: 8px;
}

.detail .col,
.groups .col,
.annotation .col,
.block .col {
    margin-left: 4px;
}

.utilities .col,
.clipboard .col {
    margin-left: 2px;
}

.modify .tools {
    padding-left: 7px;
}

.m0 { width: 73px; }
.m1 { width: 65px; }
.m2 { width: 71px; }

.layers .col {
    flex: 1;
    padding: 0 3px 0 1px;
}

.layer-icons {
    height: 24px;
    display: flex;
    align-items: center;
    justify-content: space-between;
    padding: 0 3px 0 4px;
}

.combo {
    height: 22px;
    box-sizing: border-box;
    margin: 1px 0;
    padding: 0 2px 0 3px;
    display: flex;
    align-items: center;
    gap: 3px;
    border: 1px solid #2e2e2e;
    background: linear-gradient(#555, #6a6a6a);
}

.swatch {
    width: 12px;
    height: 12px;
    margin-left: 3px;
    background: #ff0;
    border: 1px solid #111;
}

.combo select {
    flex: 1;
    font: inherit;
    color: #f0f0f0;
    background: none;
    border: none;
    appearance: none;
    padding: 0 2px;
}

.layer-move {
    display: flex;
    gap: 7px;
    padding-left: 4px;
}

/* drawing area */
.canvas {
    flex: 1;
    position: relative;
    overflow: hidden;
    background: #212830;
}

.drawing {
    position: absolute;
    inset: 0;
    width: 100%;
    height: 100%;
    pointer-events: none;
}

.w {
    fill: none;
    stroke: #e6e7e8;
    stroke-width: 1.3;
}

.thin {
    fill: none;
    stroke: #f0f0f0;
}

.navbar {
    position: absolute;
    right: 4px;
    top: 219px;
}

.vp-label {
    position: absolute;
    left: 3px;
    top: 6px;
    line-height: 16px;
    color: #dedede;
}

.doc-controls {
    position: absolute;
    top: 9px;
    right: 10px;
    display: flex;
    gap: 8px;
}

.cube {
    position: absolute;
    top: 38px;
    right: 15px;
}

.dir {
    font: 700 18px "Liberation Sans", sans-serif;
    fill: #a6a8a9;
    text-anchor: middle;
}

.cube-top {
    font: 700 11px "Open Sans", sans-serif;
    fill: #444b50;
    text-anchor: middle;
}

.wcs {
    position: absolute;
    top: 177px;
    right: 51px;
    width: 48px;
    height: 17px;
    justify-content: center;
    gap: 4px;
    font-size: 11px;
    color: #4c4c56;
    background: #8c8c9a;
    border: 1px solid #777784;
    border-radius: 4px;
}

.command {
    position: absolute;
    left: 299px;
    right: 299px;
    bottom: 1px;
    height: 26px;
    box-sizing: border-box;
    display: flex;
    align-items: center;
    border: 1px solid #6a6a6a;
    background: linear-gradient(#606060, #414141);
}

.grip {
    width: 6px;
    height: 18px;
    margin: 0 1px 0 3px;
    background: radial-gradient(circle, #999 1px, transparent 1px) 0 0 / 3px 3px;
}

.cmd-btn {
    width: 21px;
    justify-content: center;
}

.cmd-box {
    flex: 1;
    align-self: stretch;
    display: flex;
    align-items: center;
    gap: 3px;
    padding: 0 4px 0 5px;
    background: #bcbebf;
}

.cmd-box input {
    flex: 1;
    border: none;
    background: none;
    padding: 0 0 0 5px;
    font: italic 12px "DejaVu Sans Mono", monospace;
    outline: none;
}

.cmd-box input::placeholder {
    color: #777;
    opacity: 1;
}

.tri-up {
    border: 4px solid transparent;
    border-bottom-color: #222;
    border-top: none;
}

/* layout tabs and status bar */
.bottom {
    height: 48px;
    flex: none;
    box-sizing: border-box;
    display: flex;
    justify-content: space-between;
    border-top: 1px solid #5c5c5c;
}

.layouts {
    display: flex;
    height: 17px;
    padding-left: 11px;
    gap: 1px;
}

.layouts button {
    width: 64px;
    justify-content: center;
    color: #b4b4b4;
    background: linear-gradient(#484848, #666);
    clip-path: polygon(0 0, 100% 0, 90% 85%, 85% 100%, 15% 100%, 10% 85%);
}

.layouts .active {
    width: 58px;
    color: #fff;
    font-weight: 700;
    background: linear-gradient(#555, #999);
}

.layouts .plus {
    width: 24px;
    background: #555;
    border-radius: 0 0 10px 4px;
    clip-path: polygon(20% 0, 100% 0, 90% 85%, 70% 100%, 0 100%);
}

.status {
    align-self: flex-end;
    display: flex;
    gap: 2px;
    padding-right: 1px;
}

.group {
    display: flex;
    height: 26px;
    border: 1px solid #7c7c7c;
    background: #4e4e4e;
}

.cell {
    display: flex;
    align-items: center;
}

.cell + .cell {
    border-left: 1px solid #7c7c7c;
}

.st {
    width: 24px;
    justify-content: center;
}

.drop {
    width: 14px;
    display: flex;
    justify-content: center;
}

.model {
    padding: 0 3px;
    color: #fff;
}

/* taskbar */
.taskbar {
    height: 40px;
    flex: none;
    display: flex;
    align-items: stretch;
    background: linear-gradient(90deg, #d0e6ee, #d3e3ec 60%, #d8dbea);
    color: #111;
}

.task {
    width: 49px;
    justify-content: center;
    border-bottom: 2px solid transparent;
    border-top: 2px solid transparent;
    box-sizing: border-box;
}

.task.open {
    border-bottom-color: #0078d7;
    width: 41px;
    margin: 0 4px;
}

.task.current {
    border-bottom-color: #0078d7;
    background: #edf5f9;
}

.tray {
    margin-left: auto;
    display: flex;
    align-items: center;
    gap: 6px;
}

.lang {
    margin-left: 2px;
}

.clock {
    width: 66px;
    text-align: center;
    line-height: 18px;
    margin-right: 2px;
}

.note {
    width: 24px;
    justify-content: center;
}

.show-desktop {
    width: 4px;
    height: 100%;
    margin-left: 9px;
    border-left: 1px solid #a9b2c0;
}
</style>
